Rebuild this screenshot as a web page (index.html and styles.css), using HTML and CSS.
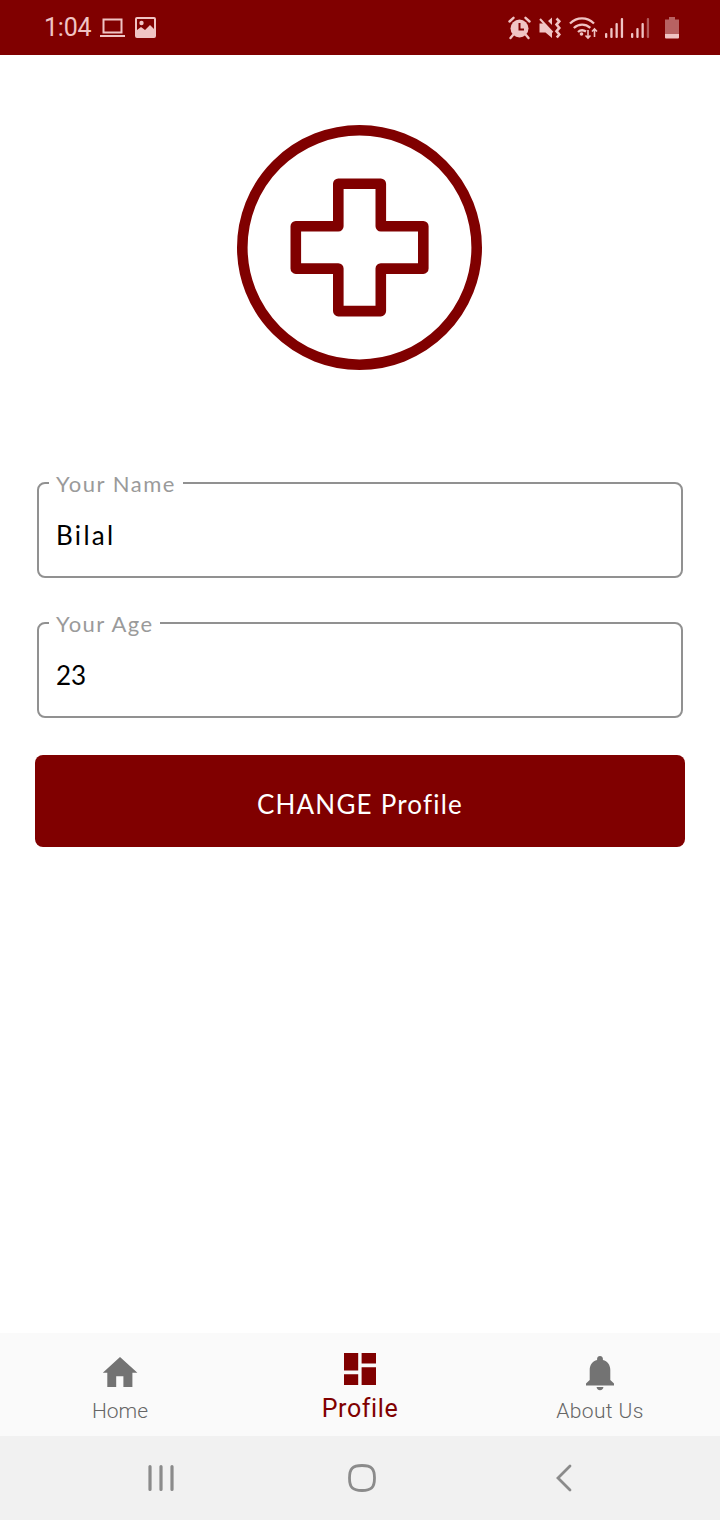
FILE: index.html
```html
<!DOCTYPE html>
<html lang="en">
  <head>
    <meta charset="UTF-8" />
    <meta name="viewport" content="width=device-width, initial-scale=1.0" />
    <title>Profile</title>
    <link rel="stylesheet" href="styles.css">
  </head>
  <body>
    <div class="status-bar">
      <div class="status-left">
        <span class="clock">1:04</span>
        <svg class="laptop" width="25" height="20" viewBox="0 0 25 20" fill="none" stroke="currentColor" stroke-width="2">
          <rect x="3.5" y="1.5" width="18" height="13" />
          <path d="M0 18h25" />
        </svg>
        <svg width="21" height="21" viewBox="0 0 21 21">
          <path fill="currentColor" fill-rule="evenodd" d="M2 0h17a2 2 0 0 1 2 2v17a2 2 0 0 1-2 2H2a2 2 0 0 1-2-2V2a2 2 0 0 1 2-2zM2 2v11l4-3 4 3 5-5 4 4V2z" />
          <circle cx="6.5" cy="6" r="2.2" fill="currentColor" />
        </svg>
      </div>
      <div class="status-right">
        <svg class="alarm" width="23" height="24" viewBox="0 0 23 24">
          <circle cx="11.5" cy="12.5" r="9" fill="currentColor" />
          <path d="M1.5 5.5l4-3.7M21.5 5.5l-4-3.7M5 19l-2.5 3M18 19l2.5 3" stroke="currentColor" stroke-width="2.4" stroke-linecap="round" />
          <path class="cutout" d="M11.5 7v6.5h4.5" />
        </svg>
        <svg class="mute" width="23" height="24" viewBox="0 0 23 24">
          <path fill="currentColor" d="M.5 7.500H5L13 15.500V22l-6.500-5.500H.5zM9 5l4-3.500V9z" />
          <path d="M1 3l12.500 13.500" fill="none" stroke="currentColor" stroke-width="2" />
          <path d="M17.500 2.500l2.800 2.800-2.800 3.300 2.800 3.300-2.800 3.300 2.800 3.300-2.500 3" fill="none" stroke="currentColor" stroke-width="2.600" />
        </svg>
        <svg class="wifi" width="29" height="24" viewBox="0 0 29 24" fill="none" stroke="currentColor" stroke-width="2.3">
          <path d="M1 7.5C8 .7 18 .7 25 7.5M4.8 12c5-4.500 11.500-4.500 16.500-.2M9 16c2.200-2 5.200-2.300 8-.5" />
          <circle cx="12.5" cy="18" r="1.8" fill="currentColor" stroke="none" />
          <path stroke-width="1.6" d="M19 14v8M16.500 19.500l2.500 2.500 2.500-2.500M25.500 21v-8M23 15.500l2.500-2.500 2.500 2.500" />
        </svg>
        <svg class="signal" width="19" height="22" viewBox="0 0 19 22" fill="currentColor">
          <rect x="0" y="16" width="2.3" height="5" rx="1" />
          <rect x="5.3" y="11" width="2.3" height="10" rx="1" />
          <rect x="10.5" y="6" width="2.3" height="15" rx="1" />
          <rect x="15.8" y="1" width="2.3" height="20" rx="1" />
        </svg>
        <svg class="signal" width="19" height="22" viewBox="0 0 19 22" fill="currentColor">
          <rect x="0" y="16" width="2.3" height="5" rx="1" />
          <rect x="5.3" y="11" width="2.3" height="10" rx="1" />
          <rect x="10.5" y="6" width="2.3" height="15" rx="1" />
          <rect x="15.8" y="1" width="2.3" height="20" rx="1" opacity="0.45" />
        </svg>
        <svg class="battery" width="14" height="22" viewBox="0 0 14 22" fill="currentColor">
          <path opacity="0.5" d="M4 0h6v2.5h4V17H0V2.5h4z" />
          <path d="M0 17h14v3.5a1 1 0 0 1-1 1H1a1 1 0 0 1-1-1z" />
        </svg>
      </div>
    </div>

    <main>
      <svg class="logo" width="246" height="246" viewBox="0 0 246 246" fill="none" stroke="currentColor" stroke-width="10.6">
        <circle cx="122.5" cy="122.5" r="117.2" />
        <path stroke-linejoin="round" d="M101.3 58.8h42.5v42.5h42.5v42.3h-42.500v42.500h-42.500v-42.500H58.800v-42.300h42.500z" />
      </svg>

      <form>
        <fieldset class="field name">
          <legend>Your Name</legend>
          <div class="value">Bilal</div>
        </fieldset>
        <fieldset class="field age">
          <legend>Your Age</legend>
          <div class="value">23</div>
        </fieldset>
        <button type="button">CHANGE Profile</button>
      </form>
    </main>

    <nav class="tabs">
      <div class="tab home">
        <svg width="36" height="32" viewBox="0 0 36 32">
          <path fill="currentColor" d="M18 1L.8 16.7H5.300V31h8.900V20.200h7.200V31h9V16.700h5z" />
        </svg>
        <span>Home</span>
      </div>
      <div class="tab active">
        <svg width="32" height="32" viewBox="0 0 32 32">
          <path fill="currentColor" d="M0 0h14.2v17.6H0zM17.6 0H32v10.6H17.6zM0 21.2h14.2V32H0zM17.6 14.2H32V32H17.6z" />
        </svg>
        <span>Profile</span>
      </div>
      <div class="tab about">
        <svg width="28" height="35" viewBox="0 0 28 35">
          <path fill="currentColor" d="M14 0c-1.7 0-2.9 1.2-2.9 2.8v1.100C6.600 5 3.700 8.800 3.700 13.800v10.300L0 27.600v1.800h28v-1.800l-3.700-3.500V13.800c0-5-2.900-8.800-7.400-9.900V2.800C16.900 1.200 15.700 0 14 0zM10.600 31h6.800c0 1.900-1.500 3.300-3.400 3.300S10.600 32.900 10.600 31z" />
        </svg>
        <span>About Us</span>
      </div>
    </nav>

    <div class="system-nav">
      <svg class="recents" width="26" height="28" viewBox="0 0 26 28" fill="none" stroke="currentColor" stroke-width="3.2" stroke-linecap="round">
        <path d="M2 2.500v23M13 2.500v23M24 2.500v23" />
      </svg>
      <svg class="home-key" width="28" height="28" viewBox="0 0 28 28" fill="none" stroke="currentColor" stroke-width="2.8">
        <path d="M14 1.500C4.500 1.500 1.500 4.500 1.500 14S4.500 26.500 14 26.500 26.500 23.500 26.500 14 23.500 1.500 14 1.500z" />
      </svg>
      <svg width="16" height="28" viewBox="0 0 16 28" fill="none" stroke="currentColor" stroke-width="2.8" stroke-linecap="round">
        <path d="M14 2L2 14l12 12" />
      </svg>
    </div>
  </body>
</html>
```
FILE: styles.css
```css
* {
  box-sizing: border-box;
}
body {
  margin: 0;
  height: 1520px;
  display: flex;
  flex-direction: column;
  background-color: #fff;
  font-family: Lato, sans-serif;
}
svg {
  display: block;
  flex-shrink: 0;
}
.status-bar {
  height: 55px;
  padding: 0 41px 0 44px;
  display: flex;
  align-items: center;
  justify-content: space-between;
  background-color: #800000;
  color: #f0c4c4;
}
.status-left,
.status-right {
  display: flex;
  align-items: center;
}
.clock {
  width: 56px;
  padding-top: 1px;
  font-family: Roboto, sans-serif;
  font-size: 25px;
  letter-spacing: -0.2px;
  line-height: 30px;
}
.laptop {
  margin-right: 10px;
}
.alarm {
  margin-right: 8px;
}
.cutout {
  fill: none;
  stroke: #800000;
  stroke-width: 2;
}
.mute {
  margin-right: 7px;
}
.wifi {
  margin-right: 7px;
}
.signal {
  margin-right: 7px;
}
.battery {
  margin-left: 8px;
}
main {
  flex: 1;
  padding: 70px 35px 0;
}
.logo {
  margin: 0 auto;
  color: #800000;
}
form {
  margin-top: 100px;
}
.field {
  height: 107px;
  margin: 0 2px 33px;
  padding: 0 0 0 10px;
  border: 2px solid #919191;
  border-radius: 8px;
}
.field legend {
  height: 24px;
  padding: 0 7px;
  font-size: 22px;
  line-height: 26px;
  color: #9a9a9a;
  white-space: nowrap;
}
.name legend {
  width: 134px;
  letter-spacing: 1.5px;
}
.age legend {
  width: 111px;
  letter-spacing: 1.4px;
}
.value {
  padding: 24px 0 0 7px;
  font-size: 26px;
  line-height: 32px;
  color: #000;
}
.name .value {
  letter-spacing: 2.3px;
}
button {
  display: block;
  width: 100%;
  height: 92px;
  margin-top: 37px;
  padding: 6px 0 0;
  border: none;
  border-radius: 8px;
  background-color: #800000;
  color: #fff;
  font-family: Lato, sans-serif;
  font-size: 26px;
  letter-spacing: 1.2px;
}
.tabs {
  height: 103px;
  display: flex;
  background-color: #fafafa;
  font-family: Roboto, "Noto Sans", sans-serif;
  font-weight: 300;
}
.tab {
  flex: 1;
  display: flex;
  flex-direction: column;
  align-items: center;
  color: #666;
  font-size: 21px;
  line-height: 28px;
}
.tab svg {
  color: #737373;
}
.home {
  padding-top: 23px;
}
.home span {
  margin-top: 9px;
}
.about {
  padding-top: 23px;
}
.about span {
  margin-top: 6px;
  letter-spacing: 0.4px;
}
.active {
  padding-top: 20px;
  color: #800000;
  font-size: 25px;
  font-weight: 400;
  letter-spacing: 0.6px;
}
.active svg {
  color: #800000;
}
.active span {
  margin-top: 10px;
}
.system-nav {
  height: 84px;
  padding: 0 147px 0 148px;
  display: flex;
  align-items: center;
  background-color: #f1f1f1;
  color: #8b8b8b;
}
.recents {
  margin-right: 174px;
}
.home-key {
  margin-right: 180px;
}
```
